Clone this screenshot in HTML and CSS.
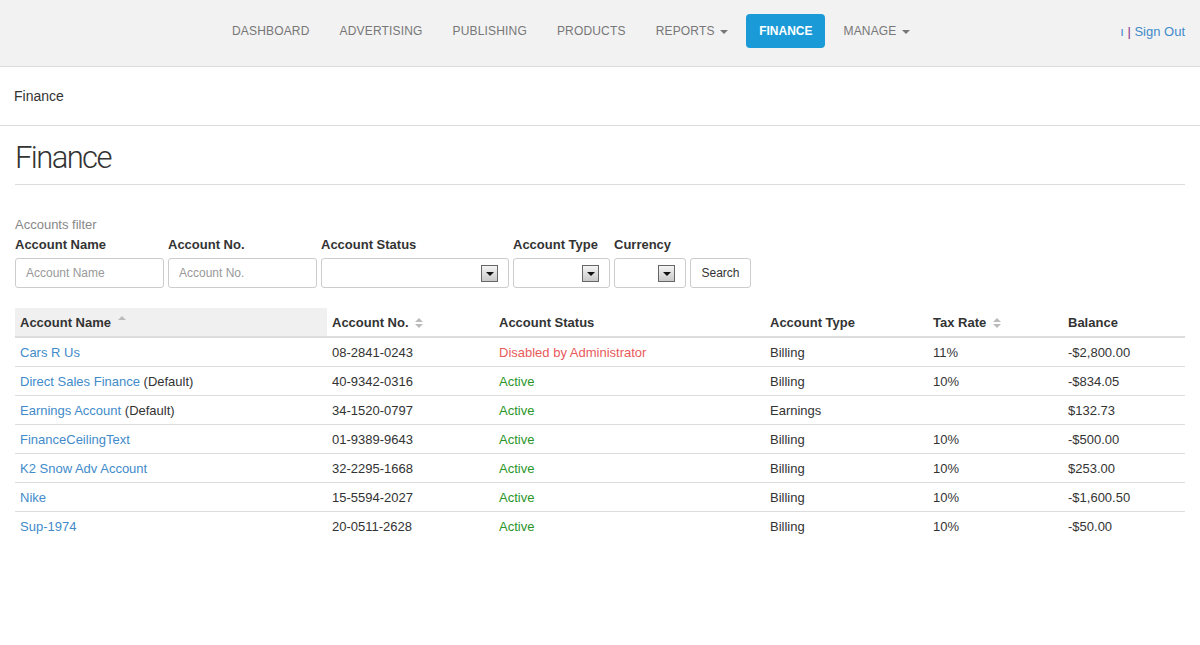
FILE: index.html
```html
<!DOCTYPE html>
<html>
    <head>
        <meta charset="UTF-8">
        <title>Finance</title>
        <link rel="stylesheet" href="styles.css">
    </head>
    <body>
        <header class="navbar">
            <ul class="nav">
                <li><a href="#">Dashboard</a></li>
                <li><a href="#">Advertising</a></li>
                <li><a href="#">Publishing</a></li>
                <li><a href="#">Products</a></li>
                <li><a href="#">Reports <span class="caret"></span></a></li>
                <li class="active"><a href="#">Finance</a></li>
                <li><a href="#">Manage <span class="caret"></span></a></li>
            </ul>
            <div class="user">
                <a href="#">ı</a> <span class="sep">|</span> <a href="#">Sign Out</a>
            </div>
        </header>

        <div class="breadcrumb">Finance</div>

        <div class="main">
            <h1 class="page-header">Finance</h1>

            <form class="filter">
                <div class="filter-title">Accounts filter</div>
                <div class="filter-row">
                    <div class="field w-name">
                        <label>Account Name</label>
                        <input type="text" placeholder="Account Name">
                    </div>
                    <div class="field w-name">
                        <label>Account No.</label>
                        <input type="text" placeholder="Account No.">
                    </div>
                    <div class="field w-status">
                        <label>Account Status</label>
                        <div class="select"><span class="arrow"></span></div>
                    </div>
                    <div class="field w-type">
                        <label>Account Type</label>
                        <div class="select"><span class="arrow"></span></div>
                    </div>
                    <div class="field w-cur">
                        <label>Currency</label>
                        <div class="select"><span class="arrow"></span></div>
                    </div>
                    <div class="field">
                        <label>&nbsp;</label>
                        <button type="button" class="btn">Search</button>
                    </div>
                </div>
            </form>

            <table class="accounts">
                <colgroup>
                    <col style="width:312px">
                    <col style="width:167px">
                    <col style="width:271px">
                    <col style="width:163px">
                    <col style="width:135px">
                    <col style="width:122px">
                </colgroup>
                <thead>
                    <tr>
                        <th class="sorted">Account Name <span class="sort up"></span></th>
                        <th>Account No. <span class="sort both"></span></th>
                        <th>Account Status</th>
                        <th>Account Type</th>
                        <th>Tax Rate <span class="sort both"></span></th>
                        <th>Balance</th>
                    </tr>
                </thead>
                <tbody>
                    <tr>
                        <td><a href="#">Cars R Us</a></td>
                        <td>08-2841-0243</td>
                        <td class="disabled">Disabled by Administrator</td>
                        <td>Billing</td>
                        <td>11%</td>
                        <td>-$2,800.00</td>
                    </tr>
                    <tr>
                        <td><a href="#">Direct Sales Finance</a> (Default)</td>
                        <td>40-9342-0316</td>
                        <td class="ok">Active</td>
                        <td>Billing</td>
                        <td>10%</td>
                        <td>-$834.05</td>
                    </tr>
                    <tr>
                        <td><a href="#">Earnings Account</a> (Default)</td>
                        <td>34-1520-0797</td>
                        <td class="ok">Active</td>
                        <td>Earnings</td>
                        <td></td>
                        <td>$132.73</td>
                    </tr>
                    <tr>
                        <td><a href="#">FinanceCeilingText</a></td>
                        <td>01-9389-9643</td>
                        <td class="ok">Active</td>
                        <td>Billing</td>
                        <td>10%</td>
                        <td>-$500.00</td>
                    </tr>
                    <tr>
                        <td><a href="#">K2 Snow Adv Account</a></td>
                        <td>32-2295-1668</td>
                        <td class="ok">Active</td>
                        <td>Billing</td>
                        <td>10%</td>
                        <td>$253.00</td>
                    </tr>
                    <tr>
                        <td><a href="#">Nike</a></td>
                        <td>15-5594-2027</td>
                        <td class="ok">Active</td>
                        <td>Billing</td>
                        <td>10%</td>
                        <td>-$1,600.50</td>
                    </tr>
                    <tr>
                        <td><a href="#">Sup-1974</a></td>
                        <td>20-0511-2628</td>
                        <td class="ok">Active</td>
                        <td>Billing</td>
                        <td>10%</td>
                        <td>-$50.00</td>
                    </tr>
                </tbody>
            </table>
        </div>
    </body>
</html>
```

FILE: styles.css
```css
* {
    box-sizing: border-box;
}

body {
    margin: 0;
    font-family: "Liberation Sans", Arial, sans-serif;
    font-size: 13px;
    color: #333;
    background: #fff;
}

a {
    color: #428bca;
    text-decoration: none;
}

/* top bar */
.navbar {
    display: flex;
    align-items: center;
    height: 67px;
    background: #f2f2f2;
    border-bottom: 1px solid #dcdcdc;
    padding: 0 15px 4px 217px;
}

.nav {
    display: flex;
    align-items: center;
    list-style: none;
    margin: 0;
    padding: 0;
}

.nav a {
    display: block;
    padding: 0 15px;
    line-height: 34px;
    font-size: 12px;
    letter-spacing: 0.17px;
    text-transform: uppercase;
    color: #777;
}

.nav .active {
    margin: 0 3px;
}

.nav .active a {
    padding: 0 13px;
    background: #1a9bd7;
    color: #fff;
    font-weight: bold;
    letter-spacing: 0;
    border-radius: 4px;
}

.caret {
    display: inline-block;
    width: 0;
    height: 0;
    margin-left: 2px;
    vertical-align: middle;
    border-top: 4px solid #777;
    border-left: 4px solid transparent;
    border-right: 4px solid transparent;
}

.user {
    margin-left: auto;
    font-size: 13px;
}

.user .sep {
    color: #8b2f8b;
}

/* breadcrumb */
.breadcrumb {
    height: 59px;
    line-height: 58px;
    padding-left: 14px;
    font-size: 14px;
    border-bottom: 1px solid #dcdcdc;
}

.main {
    padding: 0 15px;
}

.page-header {
    margin: 12px 0 0;
    padding-bottom: 6px;
    line-height: 40px;
    font-family: Roboto, "Liberation Sans", sans-serif;
    font-weight: 300;
    font-size: 31px;
    letter-spacing: -1.6px;
    color: #333;
    border-bottom: 1px solid #dcdcdc;
}

/* filter */
.filter {
    margin: 32px 0 0;
}

.filter-title {
    line-height: 16px;
    color: #888;
}

.filter-row {
    display: flex;
    gap: 4px;
    margin-top: 4px;
}

.field label {
    display: block;
    line-height: 16px;
    margin-bottom: 5px;
    font-weight: bold;
}

.w-name { width: 149px; }
.w-status { width: 188px; }
.w-type { width: 97px; }
.w-cur { width: 72px; }

.field input,
.select {
    display: block;
    width: 100%;
    height: 30px;
    border: 1px solid #ccc;
    border-radius: 3px;
    background: #fff;
}

.field input {
    padding: 0 10px;
    font-family: "Liberation Sans", Arial, sans-serif;
    font-size: 12px;
    color: #333;
}

.field input::placeholder {
    color: #999;
}

.select {
    display: flex;
    align-items: center;
    justify-content: flex-end;
    padding-right: 10px;
}

.arrow {
    display: flex;
    align-items: center;
    justify-content: center;
    width: 17px;
    height: 17px;
    border: 1px solid #666;
    background: linear-gradient(#f4f4f4, #c9c9c9);
}

.arrow::after {
    content: "";
    border-top: 4px solid #111;
    border-left: 4px solid transparent;
    border-right: 4px solid transparent;
    margin-top: 1px;
}

.btn {
    width: 61px;
    height: 30px;
    padding: 0;
    font-family: "Liberation Sans", Arial, sans-serif;
    font-size: 12px;
    color: #333;
    background: #fff;
    border: 1px solid #ccc;
    border-radius: 3px;
}

/* table */
.accounts {
    width: 1170px;
    margin-top: 20px;
    border-collapse: collapse;
    table-layout: fixed;
}

.accounts th,
.accounts td {
    padding: 7px 5px 5px;
    line-height: 16px;
    text-align: left;
}

.accounts th {
    border-bottom: 2px solid #ddd;
}

.accounts th.sorted {
    background: #f0f0f0;
}

.accounts tbody tr + tr td {
    border-top: 1px solid #ddd;
}

.sort {
    display: inline-block;
    position: relative;
    width: 8px;
    height: 10px;
    margin-left: 3px;
    vertical-align: -1px;
}

.sort::before,
.sort::after {
    content: "";
    position: absolute;
    left: 0;
    border-left: 4px solid transparent;
    border-right: 4px solid transparent;
}

.sort::before {
    top: 0;
    border-bottom: 4px solid #bbb;
}

.sort.both::after {
    top: 6px;
    border-top: 4px solid #bbb;
}

.sort.up {
    vertical-align: 1px;
}

.disabled {
    color: #e85a5a;
}

.ok {
    color: #2a962a;
}
```
